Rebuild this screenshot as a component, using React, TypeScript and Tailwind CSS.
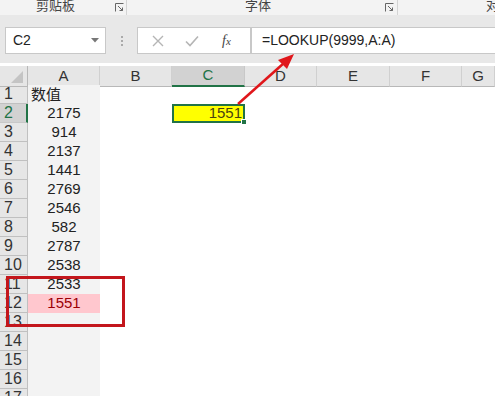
import React from "react";

const cols = ["A", "B", "C", "D", "E", "F", "G"];
const values: (string | null)[] = [
  "数值", "2175", "914", "2137", "1441", "2769", "2546", "582", "2787", "2538", "2533", "1551",
  null, null, null, null, null,
];

const font = { fontFamily: '"Liberation Sans", "Noto Sans CJK SC", sans-serif' };

function Launcher() {
  return (
    <svg width="9" height="9" viewBox="0 0 9 9" className="text-[#666]">
      <path d="M0.5 8.5V0.5H8.5" fill="none" stroke="currentColor" strokeWidth="1" />
      <path d="M3 3L7.5 7.5M7.5 4.5V7.5H4.5" fill="none" stroke="currentColor" strokeWidth="1" />
    </svg>
  );
}

export default function App() {
  return (
    <div className="relative w-[495px] h-[396px] overflow-hidden bg-white text-[#222]" style={font}>
      {/* Ribbon group labels */}
      <div className="flex h-[15px] bg-[#f3f3f3] text-[13px] leading-[15px] text-[#444]">
        <div className="relative w-[127px] border-r border-[#d4d4d4]">
          <span className="absolute left-[36px] -top-[2px]">剪贴板</span>
          <span className="absolute left-[115px] top-[3px]"><Launcher /></span>
        </div>
        <div className="relative w-[271px] border-r border-[#d4d4d4]">
          <span className="absolute left-[118px] -top-[2px]">字体</span>
          <span className="absolute left-[258px] top-[3px]"><Launcher /></span>
        </div>
        <div className="relative flex-1">
          <span className="absolute left-[88px] -top-[2px]">对</span>
        </div>
      </div>

      {/* Formula bar */}
      <div className="h-[48px] bg-[#e8e8e8] pt-[12px] flex items-start">
        <div className="ml-[5px] w-[101px] h-[27px] bg-white border border-[#c8c8c8] flex items-center justify-between pl-[7px] pr-[6px] text-[14px]">
          <span>C2</span>
          <svg width="8" height="5" viewBox="0 0 8 5"><path d="M0 0H8L4 4.5Z" fill="#777" /></svg>
        </div>
        <div className="w-[31px] h-[27px] flex flex-col items-center justify-center gap-[2px]">
          <span className="w-[2px] h-[2px] bg-[#aaa]" />
          <span className="w-[2px] h-[2px] bg-[#aaa]" />
          <span className="w-[2px] h-[2px] bg-[#aaa]" />
        </div>
        <div className="w-[114px] h-[27px] bg-white border border-[#c8c8c8] flex items-center">
          <svg width="12" height="12" viewBox="0 0 12 12" className="ml-[14px]">
            <path d="M1 1L11 11M11 1L1 11" stroke="#b5b5b5" strokeWidth="1.4" />
          </svg>
          <svg width="14" height="12" viewBox="0 0 14 12" className="ml-[21px]">
            <path d="M1 6.5L5 10.5L13 1.5" fill="none" stroke="#b5b5b5" strokeWidth="1.6" />
          </svg>
          <span className="ml-[23px] italic text-[14px] text-[#444]" style={{ fontFamily: '"Liberation Serif", serif' }}>
            f<span className="text-[11px]">x</span>
          </span>
        </div>
        <div className="flex-1 h-[27px] bg-white border border-[#c8c8c8] border-r-0 flex items-center pl-[10px] text-[14px]">
          =LOOKUP(9999,A:A)
        </div>
      </div>

      {/* Sheet */}
      <div className="mt-[3px] grid grid-cols-[28px_72px_72px_73px_72px_73px_72px_1fr] auto-rows-[19px] text-[14px]">
        {/* Header row */}
        <div className="h-[21px] bg-[#e6e6e6] border-r border-b border-[#b8b8b8] relative">
          <svg width="12" height="12" viewBox="0 0 12 12" className="absolute right-[4px] bottom-[3px]">
            <path d="M12 0V12H0Z" fill="#c4c4c4" />
          </svg>
        </div>
        {cols.map((c) => (
          <div
            key={c}
            className={
              c === "C"
                ? "h-[21px] bg-[#d2d2d2] border-b-2 border-[#217346] border-r border-r-[#c8c8c8] flex items-center justify-center text-[15px] text-[#217346]"
                : "h-[21px] bg-[#e6e6e6] border-b border-r border-[#b8b8b8] border-r-[#d0d0d0] flex items-center justify-center text-[15px] text-[#333]"
            }
          >
            {c}
          </div>
        ))}

        {values.map((v, i) => {
          const row = i + 1;
          return (
            <React.Fragment key={row}>
              <div
                className={
                  row === 2
                    ? "bg-[#d2d2d2] border-r-2 border-[#217346] border-b border-b-[#c8c8c8] flex items-center pl-[4px] text-[16px] text-[#217346]"
                    : "bg-[#e6e6e6] border-r border-b border-[#c0c0c0] flex items-center pl-[4px] text-[16px] text-[#333]"
                }
              >
                {row}
              </div>
              <div
                className={
                  row === 12
                    ? "bg-[#ffc7ce] text-[#9c0006] text-[15px] flex items-center justify-center"
                    : row === 1
                    ? "bg-[#f3f3f3] flex items-center pl-[3px] text-[15px]"
                    : "bg-[#f3f3f3] flex items-center justify-center text-[15px]"
                }
                style={row === 1 ? { fontFamily: '"Noto Sans CJK SC", sans-serif' } : undefined}
              >
                {v}
              </div>
              <div />
              {row === 2 ? (
                <div className="relative bg-[#ffff00] border-2 border-[#217346] flex items-center justify-end pr-[1px] text-[15px] text-[#4a4410]">
                  1551
                  <span className="absolute -right-[4px] -bottom-[4px] w-[6px] h-[6px] bg-[#217346] border border-white" />
                </div>
              ) : (
                <div />
              )}
              <div />
              <div />
              <div />
              <div />
            </React.Fragment>
          );
        })}
      </div>

      {/* Annotations */}
      <div className="absolute left-[6px] top-[276px] w-[119px] h-[51px] border-[3px] border-[#c3161c]" />
      <svg className="absolute left-0 top-0 pointer-events-none" width="495" height="396">
        <line x1="238" y1="104" x2="284" y2="63" stroke="#e0161b" strokeWidth="2.5" />
        <path d="M294 54L278 60L287 69Z" fill="#e0161b" />
      </svg>
    </div>
  );
}
